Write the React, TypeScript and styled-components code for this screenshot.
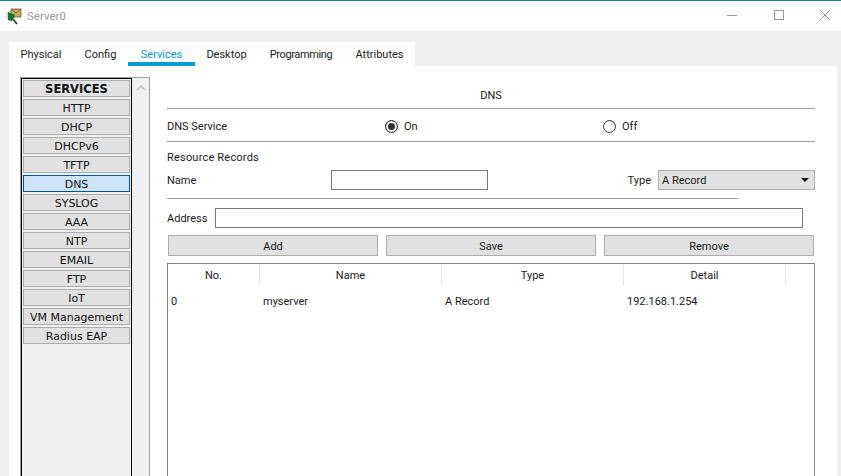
import styled, { createGlobalStyle } from "styled-components";

const TABS = [
  { label: "Physical", width: 64 },
  { label: "Config", width: 55 },
  { label: "Services", width: 67 },
  { label: "Desktop", width: 63 },
  { label: "Programming", width: 86 },
  { label: "Attributes", width: 71 },
];
const SERVICES = ["HTTP", "DHCP", "DHCPv6", "TFTP", "DNS", "SYSLOG", "AAA", "NTP", "EMAIL", "FTP", "IoT", "VM Management", "Radius EAP"];
const COLUMNS = ["No.", "Name", "Type", "Detail", ""];
const RECORD = ["0", "myserver", "A Record", "192.168.1.254", ""];

export default function App() {
  return (
    <Window>
      <GlobalStyle />
      <TitleBar>
        <AppIcon width="18" height="18" viewBox="0 0 18 18">
          <circle cx="6" cy="8.5" r="5.5" fill="#dcdcdc" />
          <path d="M8 12l4 5" stroke="#333" strokeWidth="1.6" />
          <path d="M6 2h10v8H6z" fill="#c9a862" stroke="#6b5a2a" strokeWidth="0.8" />
          <path d="M6 2l5 4 5-4" fill="none" stroke="#6b5a2a" strokeWidth="0.8" />
          <path d="M3 5l7 3-3 6-4-1z" fill="#127a2c" />
        </AppIcon>
        <TitleText>Server0</TitleText>
        <WindowControls>
          <svg width="12" height="12" viewBox="0 0 12 12">
            <path d="M0 6.5h10" stroke="#999" />
          </svg>
          <svg width="12" height="12" viewBox="0 0 12 12">
            <rect x="1.5" y="1.5" width="9" height="9" fill="none" stroke="#999" />
          </svg>
          <svg width="12" height="12" viewBox="0 0 12 12">
            <path d="M1 1l10 10M11 1L1 11" stroke="#999" />
          </svg>
        </WindowControls>
      </TitleBar>
      <Body>
        <TabStrip>
          {TABS.map((tab) => (
            <Tab
              key={tab.label}
              $width={tab.width}
              $active={tab.label === "Services"}
              $tight={tab.label === "Programming"}
            >
              {tab.label}
            </Tab>
          ))}
        </TabStrip>
        <Content>
          <Sidebar>
            <ServiceList>
              <ServiceButton $heading>SERVICES</ServiceButton>
              {SERVICES.map((service) => (
                <ServiceButton key={service} $selected={service === "DNS"}>
                  {service}
                </ServiceButton>
              ))}
            </ServiceList>
            <ScrollTrack>
              <svg width="10" height="6" viewBox="0 0 10 6">
                <path d="M1 5l4-4 4 4" fill="none" stroke="#c4c4c4" strokeWidth="1.6" />
              </svg>
            </ScrollTrack>
          </Sidebar>
          <Main>
            <PanelTitle>DNS</PanelTitle>
            <Rule />
            <ServiceRow>
              <Label>DNS Service</Label>
              <RadioOption>
                <Radio $checked />
                On
              </RadioOption>
              <RadioOption>
                <Radio />
                Off
              </RadioOption>
            </ServiceRow>
            <Rule />
            <SectionLabel>Resource Records</SectionLabel>
            <NameRow>
              <Label>Name</Label>
              <NameInput />
              <TypeField>
                <Label>Type</Label>
                <Select>
                  A Record
                  <Caret />
                </Select>
              </TypeField>
            </NameRow>
            <ShortRule />
            <AddressRow>
              <Label>Address</Label>
              <AddressInput />
            </AddressRow>
            <ButtonRow>
              <ActionButton>Add</ActionButton>
              <ActionButton>Save</ActionButton>
              <ActionButton>Remove</ActionButton>
            </ButtonRow>
            <Table>
              <HeaderRow>
                {COLUMNS.map((column, i) => (
                  <HeaderCell key={i}>{column}</HeaderCell>
                ))}
              </HeaderRow>
              <DataRow>
                {RECORD.map((value, i) => (
                  <DataCell key={i}>{value}</DataCell>
                ))}
              </DataRow>
            </Table>
          </Main>
        </Content>
      </Body>
    </Window>
  );
}

const GlobalStyle = createGlobalStyle`
  html, body {
    margin: 0;
    padding: 0;
    overflow: hidden;
    background: #efefef;
  }
  * {
    box-sizing: border-box;
  }
`;

const Window = styled.div`
  width: 841px;
  height: 476px;
  display: flex;
  flex-direction: column;
  overflow: hidden;
  background: #efefef;
  color: #1a1a1a;
  font-family: "Roboto", "Liberation Sans", sans-serif;
  font-size: 11px;
`;

const TitleBar = styled.div`
  height: 31px;
  flex: none;
  display: flex;
  align-items: center;
  padding: 0 10px 0 5px;
  background: #fff;
  border-top: 1px solid #1f7f9f;
`;

const AppIcon = styled.svg`
  flex: none;
  margin-right: 4px;
`;

const TitleText = styled.span`
  font-size: 11.5px;
  color: #999;
`;

const WindowControls = styled.div`
  margin-left: auto;
  display: flex;
  gap: 34px;
  padding-bottom: 2px;
  svg {
    display: block;
  }
`;

const Body = styled.div`
  flex: 1;
  min-height: 0;
  display: flex;
  flex-direction: column;
  padding: 11px 4px 0 9px;
`;

const TabStrip = styled.div`
  flex: none;
  width: 406px;
  height: 24px;
  display: flex;
  background: #fff;
`;

const Tab = styled.div<{ $width: number; $active?: boolean; $tight?: boolean }>`
  width: ${(p) => p.$width}px;
  height: 24px;
  flex: none;
  display: flex;
  align-items: center;
  justify-content: center;
  padding-top: 4px;
  color: ${(p) => (p.$active ? "#0a93d0" : "#1a1a1a")};
  border-bottom: 4px solid ${(p) => (p.$active ? "#049bd6" : "transparent")};
  letter-spacing: ${(p) => (p.$tight ? "-0.4px" : "0")};
  white-space: nowrap;
`;

const Content = styled.div`
  flex: 1;
  min-height: 0;
  display: flex;
  padding: 11px 22px 0 11px;
  background: #fff;
`;

const Sidebar = styled.div`
  flex: none;
  width: 130px;
  margin-right: 17px;
  display: flex;
  background: #f0f0f0;
  border: 1px solid #a0a0a0;
  border-bottom: none;
`;

const ServiceList = styled.div`
  width: 111px;
  flex: none;
  display: flex;
  flex-direction: column;
  gap: 2px;
  padding: 1px 1px 0 1px;
  border: 1px solid #000;
  border-bottom: none;
`;

const ServiceButton = styled.div<{ $heading?: boolean; $selected?: boolean }>`
  height: 17px;
  flex: none;
  display: flex;
  align-items: center;
  justify-content: center;
  padding-top: 1px;
  font-family: "DejaVu Sans", sans-serif;
  font-size: ${(p) => (p.$heading ? "11.5px" : "11px")};
  font-weight: ${(p) => (p.$heading ? 700 : 400)};
  color: #111;
  background: ${(p) => (p.$selected ? "#cce4f7" : "#e1e1e1")};
  border: 1px solid ${(p) => (p.$selected ? "#005499" : "#adadad")};
`;

const ScrollTrack = styled.div`
  flex: 1;
  display: flex;
  justify-content: center;
  padding-top: 7px;
  svg {
    display: block;
  }
`;

const Main = styled.div`
  flex: 1;
  min-width: 0;
  display: flex;
  flex-direction: column;
`;

const PanelTitle = styled.div`
  height: 31px;
  flex: none;
  display: flex;
  align-items: center;
  justify-content: center;
  padding-top: 5px;
`;

const Rule = styled.div`
  height: 1px;
  flex: none;
  background: #a0a0a0;
`;

const ShortRule = styled(Rule)`
  width: 571px;
`;

const Label = styled.span`
  white-space: nowrap;
`;

const ServiceRow = styled.div`
  height: 32px;
  flex: none;
  display: grid;
  grid-template-columns: 218px 218px 1fr;
  align-items: center;
  padding-top: 2px;
`;

const RadioOption = styled.div`
  display: flex;
  align-items: center;
  gap: 6px;
`;

const Radio = styled.span<{ $checked?: boolean }>`
  width: 13px;
  height: 13px;
  border-radius: 50%;
  border: 1px solid #333;
  background: ${(p) => (p.$checked ? "#333" : "#fff")};
  box-shadow: ${(p) => (p.$checked ? "inset 0 0 0 2px #fff" : "none")};
`;

const SectionLabel = styled.div`
  height: 24px;
  flex: none;
  padding-top: 9px;
  letter-spacing: 0.2px;
`;

const NameRow = styled.div`
  height: 28px;
  flex: none;
  margin-bottom: 4px;
  display: flex;
  align-items: center;
`;

const TextBox = styled.div`
  height: 20px;
  background: #fff;
  border: 1px solid #7a7a7a;
`;

const NameInput = styled(TextBox)`
  width: 157px;
  margin-left: 135px;
`;

const TypeField = styled.div`
  margin-left: auto;
  display: flex;
  align-items: center;
  gap: 7px;
`;

const Select = styled.div`
  width: 157px;
  height: 20px;
  display: flex;
  align-items: center;
  justify-content: space-between;
  padding: 0 5px 0 3px;
  background: #e1e1e1;
  border: 1px solid #adadad;
`;

const Caret = styled.span`
  width: 0;
  height: 0;
  border-left: 4px solid transparent;
  border-right: 4px solid transparent;
  border-top: 4px solid #111;
`;

const AddressRow = styled.div`
  height: 20px;
  flex: none;
  margin-top: 9px;
  display: flex;
  align-items: center;
  justify-content: space-between;
`;

const AddressInput = styled(TextBox)`
  width: 588px;
  margin-right: 12px;
`;

const ButtonRow = styled.div`
  flex: none;
  margin: 7px 1px 0 1px;
  display: grid;
  grid-template-columns: repeat(3, 210px);
  column-gap: 8px;
`;

const ActionButton = styled.div`
  height: 21px;
  display: flex;
  align-items: center;
  justify-content: center;
  padding-top: 1px;
  background: #e1e1e1;
  border: 1px solid #adadad;
`;

const Table = styled.div`
  flex: 1;
  margin-top: 7px;
  border: 1px solid #82828c;
  border-bottom: none;
`;

const HeaderRow = styled.div`
  height: 22px;
  display: grid;
  grid-template-columns: 92px 182px 182px 162px 1fr;
`;

const HeaderCell = styled.div`
  display: flex;
  align-items: center;
  justify-content: center;
  border-right: 1px solid #e5e5e5;
  &:last-child {
    border-right: none;
  }
`;

const DataRow = styled.div`
  height: 30px;
  display: grid;
  grid-template-columns: 92px 182px 182px 162px 1fr;
  align-items: center;
`;

const DataCell = styled.div`
  padding-left: 3px;
`;
